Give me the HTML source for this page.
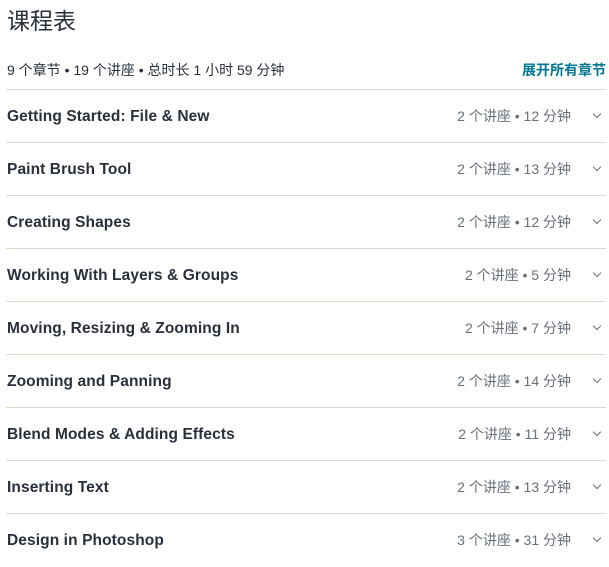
<!DOCTYPE html><html><head><meta charset="utf-8"><style>
body{margin:0;width:609px;height:559px;overflow:hidden;background:#fff;font-family:"Liberation Sans","Noto Sans CJK SC",sans-serif;color:#3c3b37}
.t{position:absolute;left:7px;top:5px;font-size:23px;line-height:32px;color:#29303b}
.s{position:absolute;left:7px;top:60px;font-size:14px;line-height:20px;color:#29303b}
.e{position:absolute;right:3px;top:60px;font-size:14px;line-height:20px;color:#007791;font-weight:bold}
.row{position:absolute;left:6px;width:600px;height:53px;border-top:1px solid #dcdacb}
.row b{position:absolute;left:1px;top:17px;font-size:15.5px;line-height:20px;color:#29303b;letter-spacing:0.1px}
.row span{position:absolute;right:35px;top:16px;font-size:14px;line-height:20px;color:#686f7a}
.row i{position:absolute;right:6px;top:21px;width:5px;height:5px;border-right:1.5px solid #686f7a;border-bottom:1.5px solid #686f7a;transform:rotate(45deg)}
</style></head><body>
<div class="t">课程表</div>
<div class="s">9 个章节 • 19 个讲座 • 总时长 1 小时 59 分钟</div>
<div class="e">展开所有章节</div>
<div class="row" style="top:89px"><b>Getting Started: File &amp; New</b><span>2 个讲座 • 12 分钟</span><i></i></div>
<div class="row" style="top:142px"><b>Paint Brush Tool</b><span>2 个讲座 • 13 分钟</span><i></i></div>
<div class="row" style="top:195px"><b>Creating Shapes</b><span>2 个讲座 • 12 分钟</span><i></i></div>
<div class="row" style="top:248px"><b>Working With Layers &amp; Groups</b><span>2 个讲座 • 5 分钟</span><i></i></div>
<div class="row" style="top:301px"><b>Moving, Resizing &amp; Zooming In</b><span>2 个讲座 • 7 分钟</span><i></i></div>
<div class="row" style="top:354px"><b>Zooming and Panning</b><span>2 个讲座 • 14 分钟</span><i></i></div>
<div class="row" style="top:407px"><b>Blend Modes &amp; Adding Effects</b><span>2 个讲座 • 11 分钟</span><i></i></div>
<div class="row" style="top:460px"><b>Inserting Text</b><span>2 个讲座 • 13 分钟</span><i></i></div>
<div class="row" style="top:513px"><b>Design in Photoshop</b><span>3 个讲座 • 31 分钟</span><i></i></div>
</body></html>
